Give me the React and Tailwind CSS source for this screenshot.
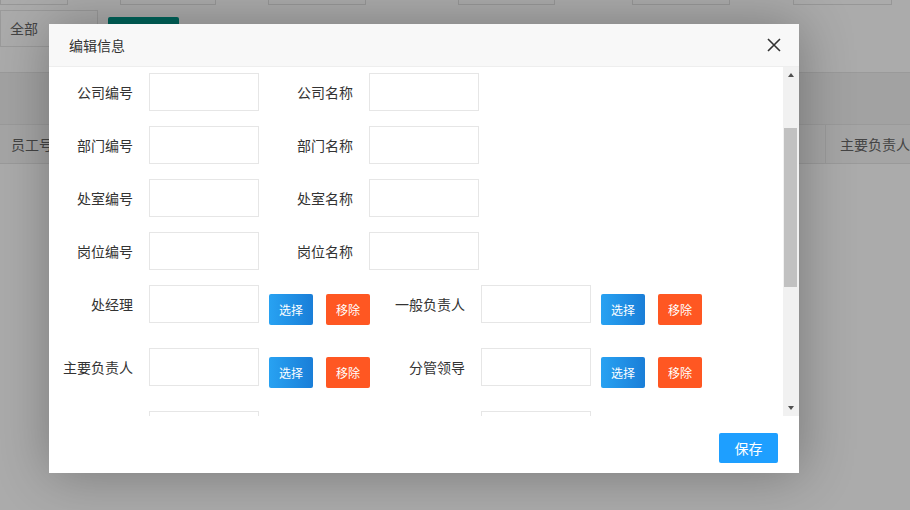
const font = { fontFamily: '"Noto Sans CJK SC", "Noto Sans", sans-serif' };

function Field({ label }) {
  return (
    <div className="flex items-center">
      <div className="w-[84px] text-right text-[14px] text-[#333]">{label}</div>
      <div className="ml-[16px] h-[38px] w-[110px] border border-[#e6e6e6] bg-white" />
    </div>
  );
}

function PickField({ label }) {
  return (
    <div className="flex items-start">
      <div className="flex h-[38px] items-center">
        <div className="w-[84px] text-right text-[14px] text-[#333]">{label}</div>
      </div>
      <div className="ml-[16px] h-[38px] w-[110px] border border-[#e6e6e6] bg-white" />
      <button className="ml-[10px] mt-[9px] h-[31px] w-[44px] rounded-[2px] bg-gradient-to-r from-[#28a2f2] to-[#1a7ed8] text-[12px] text-white">
        选择
      </button>
      <button className="ml-[13px] mt-[9px] h-[31px] w-[44px] rounded-[2px] bg-[#ff5722] text-[12px] text-white">
        移除
      </button>
    </div>
  );
}

export default function App() {
  return (
    <div className="relative h-[510px] w-[910px] overflow-hidden bg-white" style={font}>
      {/* page behind the layer */}
      <div className="flex flex-col">
        <div className="flex h-[5px] items-end">
          <div className="h-[10px] w-[68px] border border-[#e2e2e2]" />
          <div className="ml-[52px] h-[10px] w-[96px] border border-[#e2e2e2]" />
          <div className="ml-[52px] h-[10px] w-[98px] border border-[#e2e2e2]" />
          <div className="ml-[92px] h-[10px] w-[97px] border border-[#e2e2e2]" />
          <div className="ml-[77px] h-[10px] w-[98px] border border-[#e2e2e2]" />
          <div className="ml-[63px] h-[10px] w-[99px] border border-[#e2e2e2]" />
        </div>
        <div className="mt-[5px] flex items-start">
          <div className="flex h-[37px] w-[98px] items-center border border-[#e6e6e6] pl-[9px] text-[14px] text-[#666]">
            全部
          </div>
          <div className="ml-[10px] mt-[7px] h-[38px] w-[71px] rounded-[2px] bg-[#009688]" />
        </div>
        <div className="mt-[17px] h-[52px] border-t border-[#e6e6e6] bg-[#f2f2f2]" />
        <div className="flex h-[40px] items-center justify-between border-y border-[#e6e6e6] bg-[#f7f7f7] text-[14px] text-[#666]">
          <span className="pl-[11px]">员工号</span>
          <span className="flex h-full items-center border-l border-[#e6e6e6] pl-[14px]">主要负责人</span>
        </div>
      </div>

      {/* shade */}
      <div className="absolute inset-0 bg-black/[0.33]" />

      {/* edit layer */}
      <div className="absolute left-[49px] top-[24px] flex h-[449px] w-[750px] flex-col bg-white shadow-[1px_1px_50px_rgba(0,0,0,0.3)]">
        <div className="flex h-[43px] items-center justify-between border-b border-[#eee] bg-[#f8f8f8] pl-[20px] pr-[18px]">
          <span className="text-[14px] text-[#333]">编辑信息</span>
          <svg width="14" height="14" viewBox="0 0 14 14">
            <path d="M1 1L13 13M13 1L1 13" stroke="#333" strokeWidth="1.6" />
          </svg>
        </div>

        <div className="flex h-[349px]">
          <div className="flex-1 overflow-hidden pt-[6px]">
            <div className="flex flex-col gap-[15px]">
              <div className="flex gap-[10px]">
                <Field label="公司编号" />
                <Field label="公司名称" />
              </div>
              <div className="flex gap-[10px]">
                <Field label="部门编号" />
                <Field label="部门名称" />
              </div>
              <div className="flex gap-[10px]">
                <Field label="处室编号" />
                <Field label="处室名称" />
              </div>
              <div className="flex gap-[10px]">
                <Field label="岗位编号" />
                <Field label="岗位名称" />
              </div>
              <div className="flex gap-[11px]">
                <PickField label="处经理" />
                <PickField label="一般负责人" />
              </div>
              <div className="mt-[8px] flex gap-[11px]">
                <PickField label="主要负责人" />
                <PickField label="分管领导" />
              </div>
              <div className="mt-[8px] flex gap-[11px]">
                <Field label="" />
                <div className="ml-[111px]">
                  <Field label="" />
                </div>
              </div>
            </div>
          </div>

          {/* scrollbar */}
          <div className="flex w-[16px] flex-col bg-[#f1f1f1]">
            <div className="flex h-[16px] items-center justify-center">
              <div className="h-0 w-0 border-x-[3.5px] border-b-[4px] border-x-transparent border-b-[#505050]" />
            </div>
            <div className="ml-[1px] mt-[45px] h-[159px] w-[13px] bg-[#c1c1c1]" />
            <div className="flex-1" />
            <div className="flex h-[16px] items-center justify-center">
              <div className="h-0 w-0 border-x-[3.5px] border-t-[4px] border-x-transparent border-t-[#505050]" />
            </div>
          </div>
        </div>

        <div className="flex flex-1 items-start justify-end pr-[21px] pt-[17px]">
          <button className="h-[30px] w-[59px] rounded-[2px] bg-[#1e9fff] text-[14px] text-white">保存</button>
        </div>
      </div>
    </div>
  );
}
